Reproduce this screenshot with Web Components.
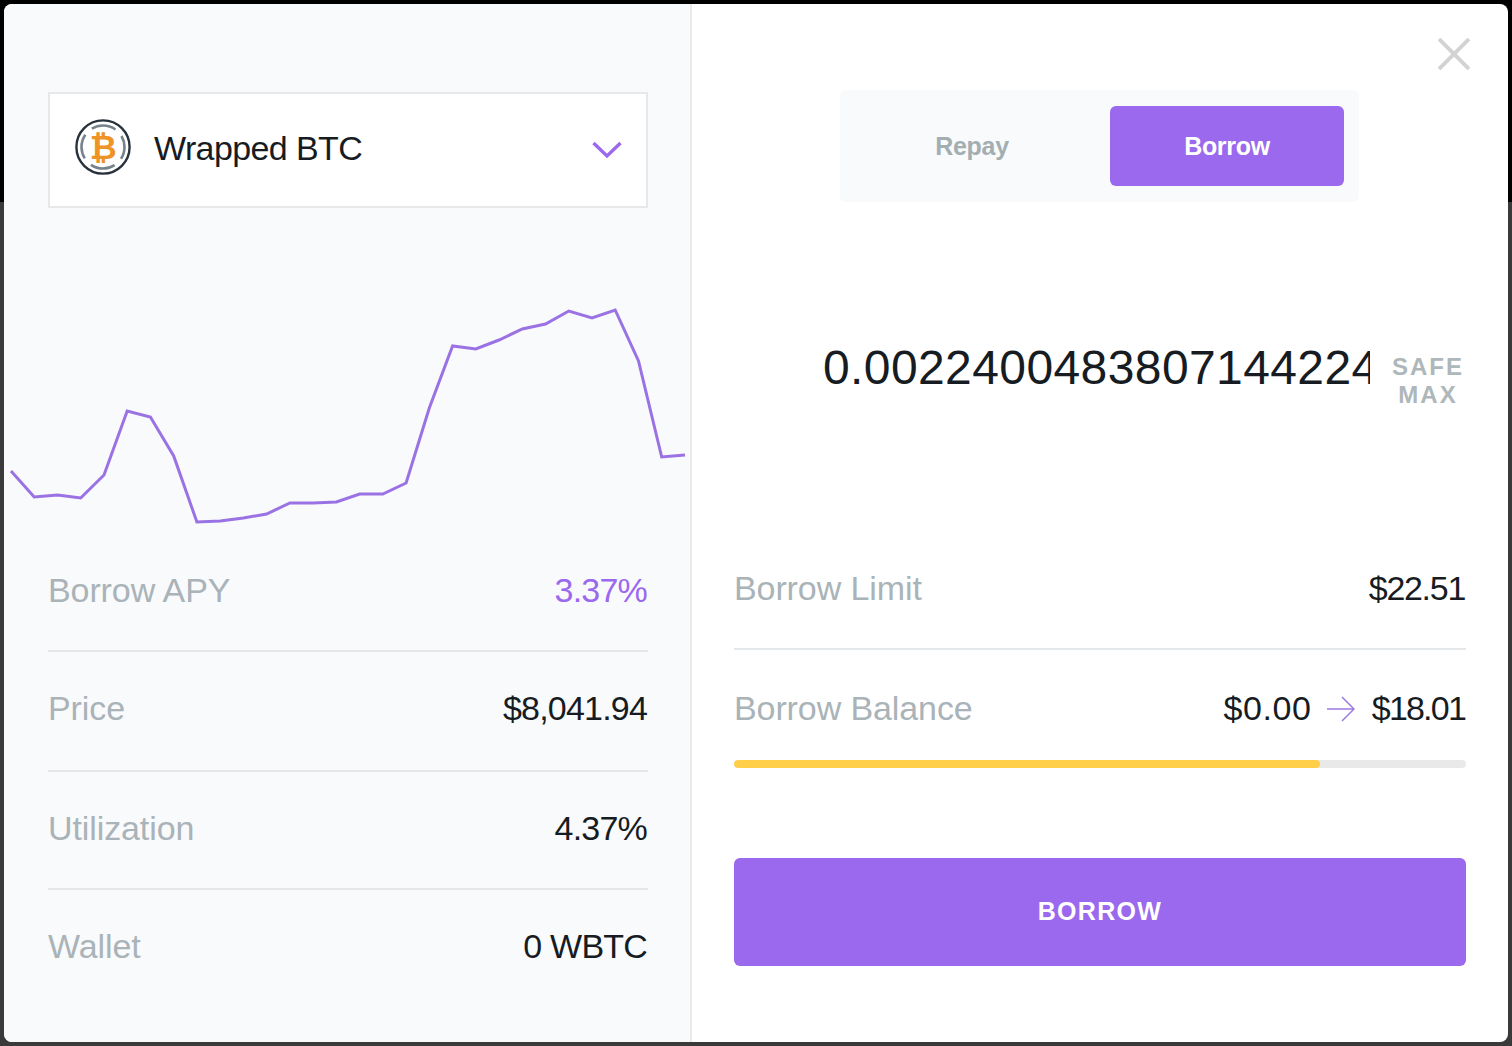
<!DOCTYPE html>
<html>
<head>
<meta charset="utf-8">
<title>Borrow</title>
<style>
html, body { margin: 0; height: 100%; }
body {
  height: 1046px;
  overflow: hidden;
  background: linear-gradient(#000 0, #000 202px, #3a3a3a 202px);
  font-family: "Liberation Sans", Arial, sans-serif;
  color: #171c22;
}
</style>
</head>
<body>
<borrow-modal>
  <market-panel slot="left">
    <token-select>Wrapped BTC</token-select>
    <price-chart></price-chart>
    <stat-row style="--pt: 36px; --pb: 40px" label="Borrow APY" accent>3.37%</stat-row>
    <stat-row style="--pt: 36px; --pb: 42px" label="Price">$8,041.94</stat-row>
    <stat-row style="--pt: 36px; --pb: 40px" label="Utilization">4.37%</stat-row>
    <stat-row style="--pt: 36px; --pb: 0" label="Wallet" last>0 WBTC</stat-row>
  </market-panel>
  <borrow-panel slot="right">
    <tab-switch></tab-switch>
    <amount-input>0.0022400483807144224</amount-input>
    <stat-row style="--pb: 40px" label="Borrow Limit"><span style="letter-spacing: -1.3px">$22.51</span></stat-row>
    <stat-row style="--pt: 38px; --pb: 0" label="Borrow Balance" last>
      <span style="letter-spacing: 0.6px">$0.00</span>
      <svg width="28" height="26" viewBox="0 0 28 26" fill="none" stroke="#9d7ae0" stroke-width="1.5" style="margin: 0 8px 4px 7px; vertical-align: middle">
        <path d="M0 13H27M15 1L27 13L15 25"/>
      </svg>
      <span style="letter-spacing: -1.8px">$18.01</span>
    </stat-row>
    <limit-bar value="80"></limit-bar>
    <action-button>BORROW</action-button>
  </borrow-panel>
</borrow-modal>

<script>
class BorrowModal extends HTMLElement {
  constructor() {
    super();
    this.attachShadow({ mode: 'open' }).innerHTML = `
<style>
:host {
  display: flex;
  position: relative;
  box-sizing: border-box;
  width: 1504px;
  height: 1038px;
  margin: 4px;
  background: #fff;
  border-radius: 8px;
  overflow: hidden;
}
::slotted([slot="left"]) { flex: 0 0 688px; }
::slotted([slot="right"]) { flex: 1 1 auto; }
#close {
  position: absolute;
  top: 34px;
  right: 38px;
}
</style>
<slot name="left"></slot>
<slot name="right"></slot>
<svg id="close" width="32" height="32" viewBox="0 0 32 32" stroke="#d3d3d3" stroke-width="4">
  <path d="M1 1L31 31M31 1L1 31"/>
</svg>`;
  }
}

class MarketPanel extends HTMLElement {
  constructor() {
    super();
    this.attachShadow({ mode: 'open' }).innerHTML = `
<style>
:host {
  display: block;
  box-sizing: border-box;
  padding: 88px 42px 0 44px;
  background: #f9fafc;
  border-right: 2px solid #e9ebed;
}
</style>
<slot></slot>`;
  }
}

class BorrowPanel extends HTMLElement {
  constructor() {
    super();
    this.attachShadow({ mode: 'open' }).innerHTML = `
<style>
:host {
  display: block;
  box-sizing: border-box;
  padding: 86px 42px 0 42px;
}
</style>
<slot></slot>`;
  }
}

class TokenSelect extends HTMLElement {
  constructor() {
    super();
    this.attachShadow({ mode: 'open' }).innerHTML = `
<style>
:host {
  display: flex;
  align-items: center;
  box-sizing: border-box;
  height: 116px;
  padding: 0 24px 0 25px;
  background: #fff;
  border: 2px solid #e6e8ea;
  font-size: 34px;
  letter-spacing: -0.6px;
  color: #171c22;
}
#coin { flex: none; margin: 0 23px 6px 0; }
#name { flex: 1; margin-bottom: 3px; }
#chevron { margin-bottom: 1px; }
#coin text {
  font-family: "DejaVu Sans", sans-serif;
  font-weight: bold;
  font-size: 33px;
  fill: #ee9326;
}
</style>
<svg id="coin" width="56" height="56" viewBox="0 0 56 56" fill="none">
  <circle cx="28" cy="28" r="26.6" stroke="#28323c" stroke-width="2.4"/>
  <circle cx="28" cy="28" r="21.5" stroke="#77838b" stroke-width="2.6" stroke-dasharray="25 8.8" stroke-dashoffset="12.5"/>
  <text x="28" y="40" text-anchor="middle">₿</text>
</svg>
<div id="name"><slot></slot></div>
<svg id="chevron" width="30" height="18" viewBox="0 0 30 18" fill="none" stroke="#9a69ee" stroke-width="3.4">
  <path d="M1.5 2L15 15L28.5 2"/>
</svg>`;
  }
}

const RATES = [471,497,495,498,475,411,417,456,522,521,518,514,503,503,502,494,494,483,408,346,349,340,329,324,311,318,310,361,457,455];

class PriceChart extends HTMLElement {
  constructor() {
    super();
    const points = RATES.map((y, i) => `${(7 + i * 23.24).toFixed(1)},${y - 292}`).join(' ');
    this.attachShadow({ mode: 'open' }).innerHTML = `
<style>
:host {
  display: block;
  height: 242px;
  margin: 84px -42px 0 -44px;
}
svg { display: block; }
</style>
<svg width="686" height="242" viewBox="0 0 686 242" fill="none">
  <polyline points="${points}" stroke="#9a72e4" stroke-width="3"/>
</svg>`;
  }
}

class StatRow extends HTMLElement {
  constructor() {
    super();
    const accent = this.hasAttribute('accent') ? '#9a69ee' : '#171c22';
    const border = this.hasAttribute('last') ? 'none' : '2px solid #e5e8ea';
    this.attachShadow({ mode: 'open' }).innerHTML = `
<style>
:host {
  display: flex;
  justify-content: space-between;
  align-items: center;
  box-sizing: border-box;
  padding: var(--pt, 37px) 0 var(--pb, 39px);
  border-bottom: ${border};
  font-size: 34px;
  line-height: 40px;
  letter-spacing: -0.8px;
}
#label { color: #a9b3b8; letter-spacing: -0.1px; }
#value { color: ${accent}; white-space: nowrap; margin-right: 1px; }
</style>
<div id="label">${this.getAttribute('label')}</div>
<div id="value"><slot></slot></div>`;
  }
}

class TabSwitch extends HTMLElement {
  constructor() {
    super();
    this.attachShadow({ mode: 'open' }).innerHTML = `
<style>
:host {
  display: flex;
  gap: 21px;
  box-sizing: border-box;
  width: 519px;
  height: 112px;
  margin: 0 0 0 106px;
  padding: 16px 15px;
  background: #f9fafc;
  border-radius: 6px;
  font-size: 25px;
  font-weight: bold;
  letter-spacing: -0.3px;
}
.tab {
  display: flex;
  flex: 1;
  height: 80px;
  align-items: center;
  justify-content: center;
  border-radius: 6px;
  color: #a3aeb2;
}
.on { background: #9a69ee; color: #fff; }
</style>
<div class="tab">Repay</div>
<div class="tab on">Borrow</div>`;
  }
}

class AmountInput extends HTMLElement {
  constructor() {
    super();
    this.attachShadow({ mode: 'open' }).innerHTML = `
<style>
:host {
  display: flex;
  align-items: center;
  justify-content: flex-end;
  height: 60px;
  margin: 136px 0 133px;
}
#amount {
  flex: 0 0 547px;
  overflow: hidden;
  white-space: nowrap;
  font-size: 48px;
  line-height: 60px;
  letter-spacing: 0.4px;
  color: #171c22;
}
#max {
  width: 76px;
  margin: 26px 0 0 20px;
  text-align: center;
  font-size: 24px;
  line-height: 28px;
  font-weight: bold;
  letter-spacing: 2px;
  color: #aeb7b9;
}
</style>
<div id="amount"><slot></slot></div>
<div id="max">SAFE MAX</div>`;
  }
}

class LimitBar extends HTMLElement {
  constructor() {
    super();
    this.attachShadow({ mode: 'open' }).innerHTML = `
<style>
:host {
  display: block;
  height: 8px;
  margin-top: 32px;
  background: #e9e9e9;
  border-radius: 4px;
  overflow: hidden;
}
div { height: 100%; background: #ffcf4a; border-radius: 4px; }
</style>
<div style="width: ${this.getAttribute('value')}%"></div>`;
  }
}

class ActionButton extends HTMLElement {
  constructor() {
    super();
    this.attachShadow({ mode: 'open' }).innerHTML = `
<style>
:host {
  display: flex;
  align-items: center;
  justify-content: center;
  box-sizing: border-box;
  height: 108px;
  margin-top: 90px;
  padding-bottom: 2px;
  background: #9a69ee;
  border-radius: 6px;
  color: #fff;
  font-size: 25px;
  font-weight: bold;
  letter-spacing: 1.3px;
}
</style>
<slot></slot>`;
  }
}

customElements.define('borrow-modal', BorrowModal);
customElements.define('market-panel', MarketPanel);
customElements.define('borrow-panel', BorrowPanel);
customElements.define('token-select', TokenSelect);
customElements.define('price-chart', PriceChart);
customElements.define('stat-row', StatRow);
customElements.define('tab-switch', TabSwitch);
customElements.define('amount-input', AmountInput);
customElements.define('limit-bar', LimitBar);
customElements.define('action-button', ActionButton);
</script>
</body>
</html>
